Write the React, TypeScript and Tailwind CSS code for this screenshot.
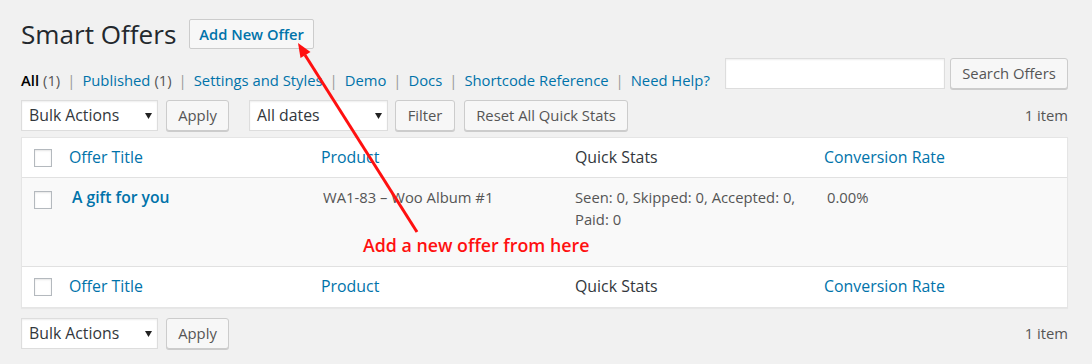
import React from "react";

function Btn({ children, className = "" }: { children: React.ReactNode; className?: string }) {
  return (
    <button
      className={
        "h-[31px] px-[11px] border border-[#ccc] bg-[#f7f7f7] rounded-[3px] shadow-[0_1px_0_#ccc] text-[#555] text-[14.8px] leading-none whitespace-nowrap " +
        className
      }
    >
      {children}
    </button>
  );
}

function Select({ label, width }: { label: string; width: string }) {
  return (
    <div
      className={
        "relative h-[31px] bg-white border border-[#ddd] shadow-[inset_0_1px_2px_rgba(0,0,0,0.07)] pl-[7px] flex items-center text-[#32373c] text-[15.8px] " +
        width
      }
    >
      <span>{label}</span>
      <svg className="absolute right-[5px] top-[12px]" width="7" height="6" viewBox="0 0 7 6">
        <path d="M0 0 H7 L3.5 6 Z" fill="#222" />
      </svg>
    </div>
  );
}

function Checkbox() {
  return <div className="ml-[12px] w-[18px] h-[18px] border border-[#b4b9be] bg-white shadow-[inset_0_1px_2px_rgba(0,0,0,0.1)]" />;
}

function HeadRow({ border }: { border: "b" | "t" }) {
  return (
    <div
      className={
        "grid grid-cols-[37px_252px_254px_249px_1fr] h-[40px] items-center text-[15.9px] " +
        (border === "b" ? "border-b border-[#e1e1e1]" : "")
      }
    >
      <Checkbox />
      <div className="pl-[10px] text-[#0073aa]">Offer Title</div>
      <div className="pl-[10px] text-[#0073aa]">Product</div>
      <div className="pl-[10px] text-[#32373c]">Quick Stats</div>
      <div className="pl-[10px] text-[#0073aa]">Conversion Rate</div>
    </div>
  );
}

export default function App() {
  const Sep = () => <span className="text-[#999] px-[7px]">|</span>;
  return (
    <div className="relative min-h-[364px] bg-[#f1f1f1] pl-[21px] pr-[24px] font-['Open_Sans',sans-serif] text-[14.8px] text-[#444]">
      <div className="flex items-center pt-[19px]">
        <h1 className="text-[26.1px] leading-[30px] text-[#23282d] font-normal">Smart Offers</h1>
        <button className="ml-[13px] h-[30px] px-[9px] border border-[#ccc] bg-[#f7f7f7] rounded-[2px] text-[#0073aa] font-semibold text-[14.7px] leading-none">
          Add New Offer
        </button>
      </div>

      <div className="mt-[9px] flex items-start justify-between">
        <div className="mt-[12px] flex leading-[20px] whitespace-nowrap">
          <span className="text-black font-semibold">All</span>
          <span className="text-[#555] ml-[4px]">(1)</span>
          <Sep />
          <span className="text-[#0073aa]">Published</span>
          <span className="text-[#555] ml-[4px]">(1)</span>
          <Sep />
          <span className="text-[#0073aa]">Settings and Styles</span>
          <Sep />
          <span className="text-[#0073aa]">Demo</span>
          <Sep />
          <span className="text-[#0073aa]">Docs</span>
          <Sep />
          <span className="text-[#0073aa]">Shortcode Reference</span>
          <Sep />
          <span className="text-[#0073aa]">Need Help?</span>
        </div>
        <div className="flex gap-[5px]">
          <input className="w-[220px] h-[31px] bg-white border border-[#ddd] shadow-[inset_0_1px_2px_rgba(0,0,0,0.07)] outline-none" />
          <Btn className="w-[118px] px-0">Search Offers</Btn>
        </div>
      </div>

      <div className="mt-[10px] flex items-center h-[31px]">
        <Select label="Bulk Actions" width="w-[137px]" />
        <Btn className="ml-[8px] w-[63px] px-0">Apply</Btn>
        <Select label="All dates" width="ml-[20px] w-[139px]" />
        <Btn className="ml-[7px] w-[60px] px-0">Filter</Btn>
        <Btn className="ml-[9px] w-[164px] px-0">Reset All Quick Stats</Btn>
        <div className="ml-auto text-[#555]">1 item</div>
      </div>

      <div className="mt-[6px] border border-[#e5e5e5] bg-white shadow-[0_1px_1px_rgba(0,0,0,0.04)]">
        <HeadRow border="b" />
        <div className="grid grid-cols-[37px_252px_254px_249px_1fr] h-[89px] items-start bg-[#f9f9f9] border-b border-[#e1e1e1] pt-[8px] leading-[22px]">
          <div className="mt-[5px]">
            <Checkbox />
          </div>
          <div className="pl-[13px] text-[15.7px] font-semibold text-[#0073aa]">A gift for you</div>
          <div className="pl-[12px] text-[#555]">WA1-83 – Woo Album #1</div>
          <div className="pl-[10px] text-[#555]">
            Seen: 0, Skipped: 0, Accepted: 0,
            <br />
            Paid: 0
          </div>
          <div className="pl-[13px] text-[#555]">0.00%</div>
        </div>
        <HeadRow border="t" />
      </div>

      <div className="mt-[10px] flex items-center h-[31px]">
        <Select label="Bulk Actions" width="w-[137px]" />
        <Btn className="ml-[8px] w-[63px] px-0">Apply</Btn>
        <div className="ml-auto text-[#555]">1 item</div>
      </div>

      <div className="absolute left-[363px] top-[234px] text-[17.8px] leading-[22px] font-semibold text-[#ff1010] whitespace-nowrap">
        Add a new offer from here
      </div>
      <svg className="absolute left-0 top-0 pointer-events-none" width="1092" height="364">
        <line x1="305" y1="55" x2="417" y2="232" stroke="#ff1010" strokeWidth="3" />
        <polygon points="298,43 300.5,58 310.5,52" fill="#ff1010" />
      </svg>
    </div>
  );
}
